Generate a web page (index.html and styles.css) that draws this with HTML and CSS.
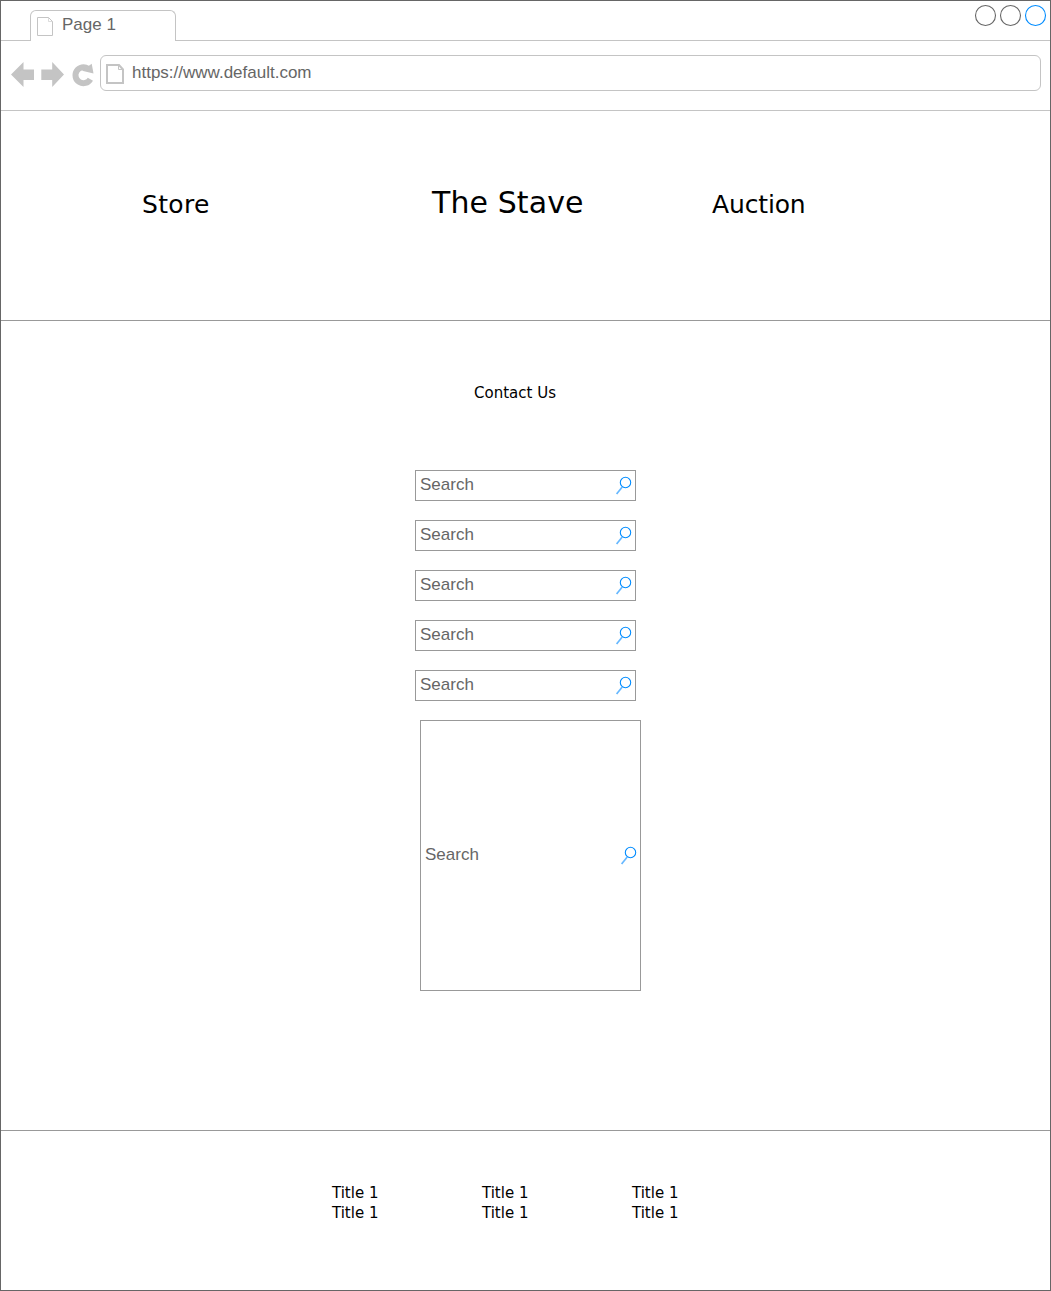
FILE: index.html
```
<!DOCTYPE html>
<html lang="en">
<head>
<meta charset="utf-8">
<title>The Stave</title>
<link rel="stylesheet" href="styles.css">
</head>
<body>
<svg width="0" height="0" class="defs">
  <symbol id="lens" viewBox="0 0 17 20">
    <circle cx="10.5" cy="7.5" r="5.2" fill="none" stroke="#008cff" stroke-width="1.1"/>
    <path d="M7.4 11.8L1.6 19" fill="none" stroke="#66b8ff" stroke-width="1.7"/>
  </symbol>
</svg>
<div class="window">
  <div class="tabs">
    <div class="tab">
      <svg class="tab-icon" width="17" height="20" viewBox="0 0 17 20" fill="none" stroke="#c4c4c4"><path d="M.5.5H11.5L15.5 4.5V18.5H.5Z"/><path d="M11.5.5V4.5H15.5" stroke-opacity=".6"/></svg>
      <span class="tab-label">Page 1</span>
    </div>
    <svg class="controls" width="76" height="24" viewBox="0 0 76 24" fill="none" stroke="#666" stroke-width="1.1">
      <circle cx="11.5" cy="11.5" r="10"/><circle cx="36.5" cy="11.5" r="10"/><circle cx="61.5" cy="11.5" r="10" stroke="#008cff"/>
    </svg>
  </div>
  <div class="toolbar">
    <svg class="nav" width="90" height="30" viewBox="10 60 90 30" fill="#c4c4c4">
      <path d="M11 74.5L23.5 62V69.5H34V80H23.5V87Z"/>
      <path d="M64 74.5L52.2 62V69.5H41.3V80H52.2V87Z"/>
      <path d="M90.4 79.2A8 8 0 1 1 88 68.6" fill="none" stroke="#c4c4c4" stroke-width="6"/>
      <path d="M91.7 63.7L93.5 73.6L82 70.8Z"/>
    </svg>
    <div class="address">
      <svg class="address-icon" width="20" height="22" viewBox="0 0 20 22" fill="none" stroke="#c4c4c4"><path d="M1 1H13L17 5.5V19H1Z" stroke-width="2"/><path d="M12.5 1V5.5H17"/></svg>
      <span class="url">https://www.default.com</span>
    </div>
  </div>
  <header class="masthead">
    <a class="store">Store</a>
    <h1 class="brand">The Stave</h1>
    <a class="auction">Auction</a>
  </header>
  <main class="contact">
    <h2 class="heading">Contact Us</h2>
    <div class="field"><span>Search</span><svg width="17" height="20"><use href="#lens"/></svg></div>
    <div class="field"><span>Search</span><svg width="17" height="20"><use href="#lens"/></svg></div>
    <div class="field"><span>Search</span><svg width="17" height="20"><use href="#lens"/></svg></div>
    <div class="field"><span>Search</span><svg width="17" height="20"><use href="#lens"/></svg></div>
    <div class="field"><span>Search</span><svg width="17" height="20"><use href="#lens"/></svg></div>
    <div class="field message"><span>Search</span><svg width="17" height="20"><use href="#lens"/></svg></div>
  </main>
  <footer class="footer">
    <div class="links"><span>Title 1</span><span>Title 1</span></div>
    <div class="links"><span>Title 1</span><span>Title 1</span></div>
    <div class="links"><span>Title 1</span><span>Title 1</span></div>
  </footer>
</div>
</body>
</html>
```
FILE: styles.css
```
* { box-sizing: border-box; }
body { margin: 0; background: #fff; color: #000; font-family: Verdana, "DejaVu Sans", sans-serif; }
svg { display: block; flex: none; }
.defs { position: absolute; }
.window { width: 1051px; height: 1291px; border: 1px solid #666; }

.tabs { display: flex; justify-content: space-between; height: 40px; padding-left: 29px; border-bottom: 1px solid #c4c4c4; }
.tab { display: flex; width: 146px; height: 31px; margin-top: 9px; padding-left: 6px; background: #fff; border: 1px solid #c4c4c4; border-bottom: 0; border-radius: 6px 6px 0 0; }
.tab-icon { margin-top: 6px; }
.tab-label { margin-left: 8px; line-height: 28px; }
.tab-label, .url, .field { font-family: Arial, "Liberation Sans", sans-serif; font-size: 17px; color: #666; }
.controls { margin-top: 3px; }

.toolbar { display: flex; height: 70px; padding: 14px 9px 0; border-bottom: 1px solid #c4c4c4; }
.nav { margin-top: 5px; }
.address { display: flex; flex: 1; height: 36px; padding-left: 5px; border: 1px solid #c4c4c4; border-radius: 6px; }
.address-icon { margin-top: 8px; }
.url { margin-left: 6px; line-height: 34px; }

.masthead { display: grid; grid-template-columns: 290px 280px 1fr; height: 210px; padding: 72px 0 0 141px; border-bottom: 1px solid #999; font-size: 25px; line-height: 44px; }
.store { letter-spacing: .35px; }
.auction { letter-spacing: -.15px; }
.brand { margin: 0; font-size: 30px; font-weight: 400; line-height: 40px; letter-spacing: .1px; }

.contact { display: flex; flex-direction: column; align-items: center; gap: 19px; height: 810px; padding-top: 62px; border-bottom: 1px solid #999; }
.heading { margin: 0 21px 48px 0; font-size: 15px; font-weight: 400; line-height: 20px; }
.field { display: flex; justify-content: space-between; align-items: center; width: 221px; height: 31px; padding: 0 3px 2px 4px; border: 1px solid #999; line-height: 27px; }
.message { height: 271px; margin-left: 10px; }

.footer { display: grid; grid-template-columns: 150px 150px 150px; padding: 52px 0 0 331px; font-size: 15px; line-height: 20px; }
.links { display: flex; flex-direction: column; }
```
